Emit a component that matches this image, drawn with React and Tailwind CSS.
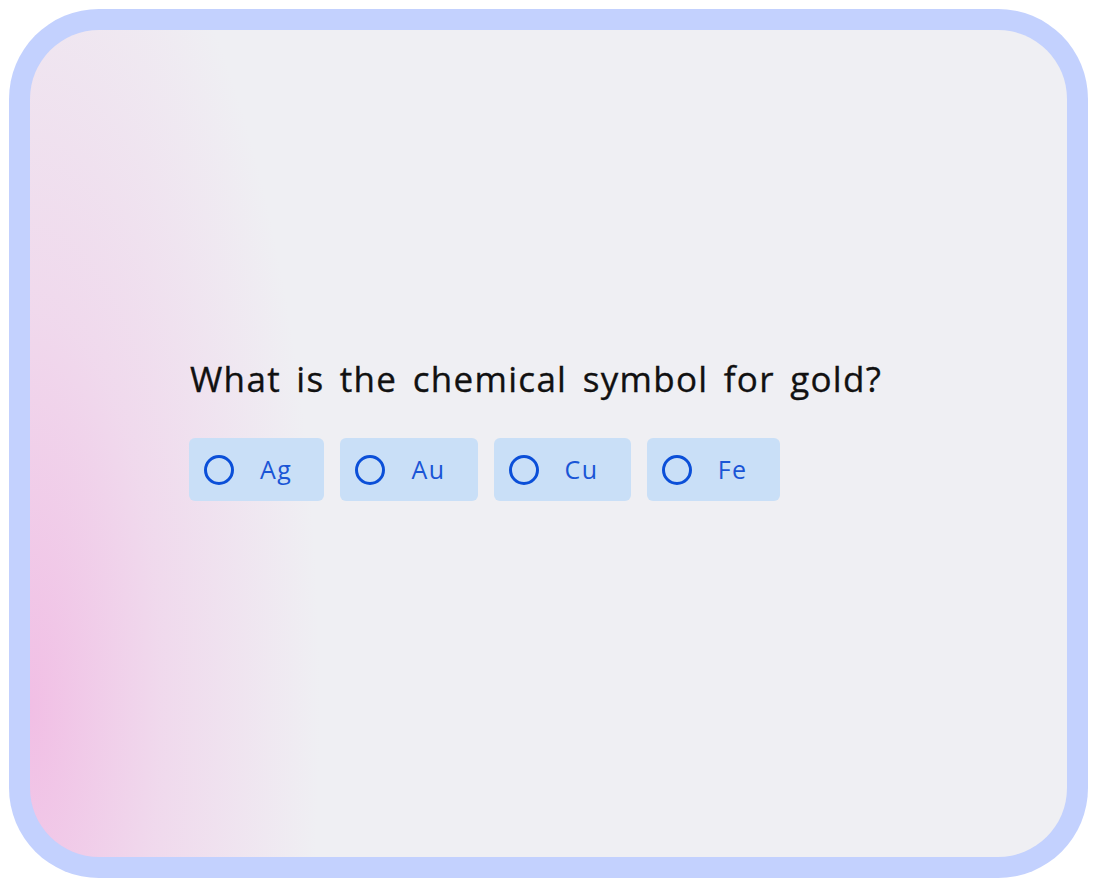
export default function App() {
  const options = ["Ag", "Au", "Cu", "Fe"];
  return (
    <div className="w-[1100px] h-[888px] bg-white pl-[9px] pt-[9px]" style={{ fontFamily: "'Open Sans', Lato, sans-serif" }}>
      <div className="w-[1079px] h-[869px] bg-[#c3d1fe] rounded-[90px] p-[21px]">
        <div className="w-full h-full rounded-[69px] bg-[#efeff3] bg-[radial-gradient(ellipse_290px_880px_at_0%_82%,rgba(241,188,228,0.95)_0%,rgba(241,190,229,0.45)_45%,rgba(241,190,229,0)_100%)] pl-[160px] pt-[325px]">
          <h1 className="text-[35px] leading-[48px] text-[#111111] tracking-[1.3px] [word-spacing:5px] font-normal [-webkit-text-stroke:0.35px_#111111]">
            What is the chemical symbol for gold?
          </h1>
          <div className="flex gap-4 mt-[35px] -ml-px">
            {options.map((o) => (
              <div key={o} className="h-[63px] flex items-center pl-[15px] pr-[32px] rounded-[6px] bg-[#c9dff7]">
                <span className="w-[30px] h-[30px] rounded-full border-[3px] border-[#0b4fd8]" />
                <span className="ml-[26px] text-[25px] text-[#1a55d6] tracking-[1.5px]">{o}</span>
              </div>
            ))}
          </div>
        </div>
      </div>
    </div>
  );
}
